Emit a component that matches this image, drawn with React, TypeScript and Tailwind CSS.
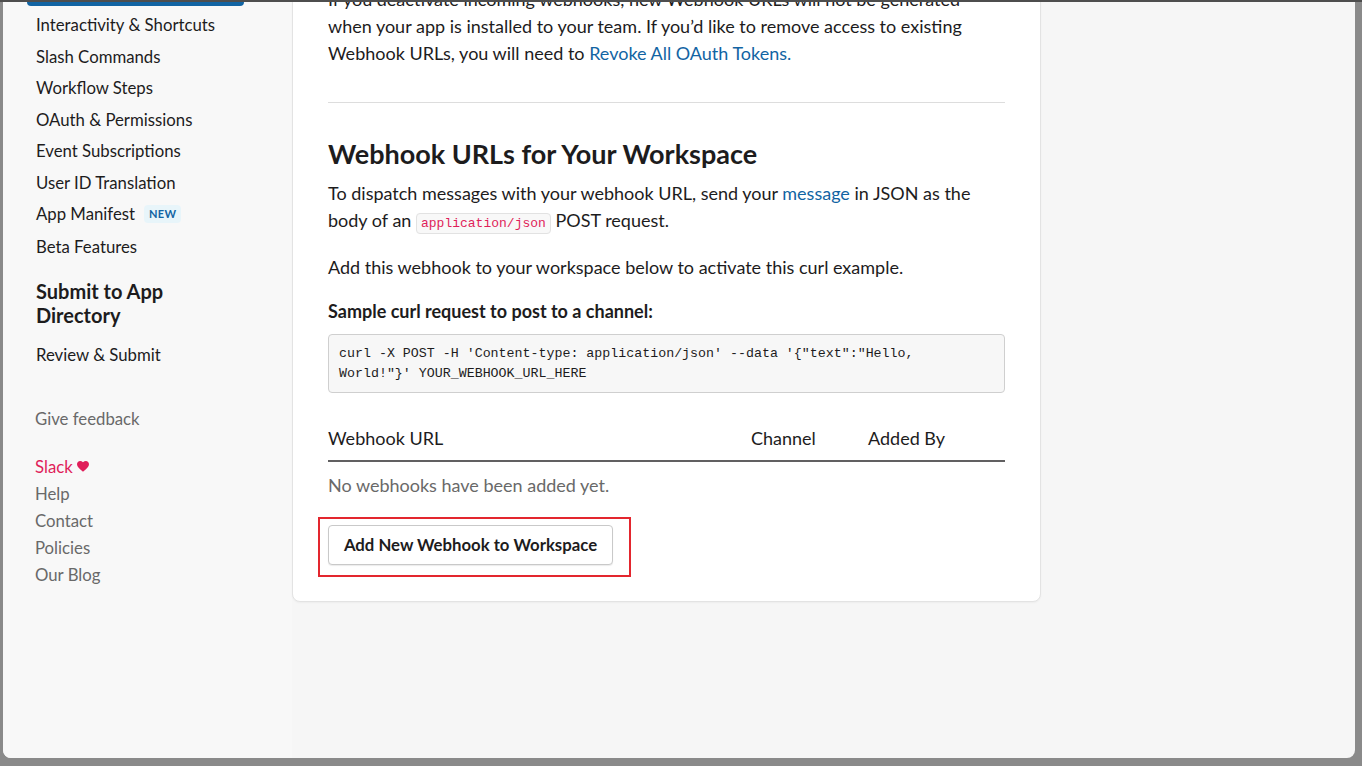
import React from 'react';

const navItems = [
    'Interactivity & Shortcuts',
    'Slash Commands',
    'Workflow Steps',
    'OAuth & Permissions',
    'Event Subscriptions',
    'User ID Translation',
];

const footerLinks = ['Help', 'Contact', 'Policies', 'Our Blog'];

const Sidebar = () => {
    return (
        <aside className="w-[289px] shrink-0 bg-[#f8f8f8] text-[#1d1c1d]">
            <div className="ml-[24px] w-[217px] h-[4px] rounded-b-md bg-[#1264a3]" />
            <div className="mt-[3px] pl-[33px] text-[16.75px]">
                {navItems.map((item) => (
                    <div key={item} className="h-[31.5px] flex items-center">
                        {item}
                    </div>
                ))}
                <div className="h-[32px] flex items-center gap-[9px]">
                    App Manifest
                    <span className="px-[5px] h-[18px] flex items-center rounded bg-[#e8f5fa] text-[#1264a3] text-[11px] font-bold tracking-wide">
                        NEW
                    </span>
                </div>
                <div className="h-[33px] flex items-center">Beta Features</div>
                <h3 className="mt-[16px] text-[20px] leading-[24px] font-bold w-[150px]">
                    Submit to App Directory
                </h3>
                <div className="mt-[12px] h-[31.5px] flex items-center">Review &amp; Submit</div>
                <div className="mt-[36px] -ml-[1px] leading-[24px] text-[#696969]">Give feedback</div>
                <div className="mt-[22.5px] -ml-[1px] leading-[27px] text-[#696969]">
                    <div className="flex items-center gap-[4px] text-[#e01e5a]">
                        Slack
                        <svg width="12" height="11" viewBox="0 0 24 22" fill="#e01e5a">
                            <path d="M12 21.5 10.3 20C4.2 14.5 0 10.8 0 6.3 0 2.7 2.8 0 6.3 0c2 0 4 .9 5.7 2.4C13.7.9 15.7 0 17.7 0 21.2 0 24 2.7 24 6.3c0 4.5-4.2 8.2-10.3 13.7L12 21.5z" />
                        </svg>
                    </div>
                    {footerLinks.map((link) => (
                        <div key={link}>{link}</div>
                    ))}
                </div>
            </div>
        </aside>
    );
};

const WebhookCard = () => {
    return (
        <section className="-mt-[17px] w-[749px] bg-white border border-[#e3e3e3] rounded-b-lg shadow-[0_1px_2px_rgba(0,0,0,0.04)] px-[35px] pb-[24px] text-[#1d1c1d] text-[18px]">
            <p className="leading-[27px] whitespace-nowrap">
                If you deactivate incoming webhooks, new Webhook URLs will not be generated
                <br />
                when your app is installed to your team. If you’d like to remove access to existing
                <br />
                Webhook URLs, you will need to <a className="text-[#1264a3]">Revoke All OAuth Tokens.</a>
            </p>
            <hr className="mt-[35px] border-0 h-px bg-[#dddddd]" />
            <h2 className="mt-[35px] text-[27px] leading-[32px] font-bold">Webhook URLs for Your Workspace</h2>
            <p className="mt-[9.5px] leading-[27px] whitespace-nowrap">
                To dispatch messages with your webhook URL, send your <a className="text-[#1264a3]">message</a> in
                JSON as the
                <br />
                body of an{' '}
                <code className="px-[4px] py-[2px] leading-none rounded border border-[#e2e2e2] bg-[#f8f8f8] text-[#e01e5a] text-[13px] font-['Liberation_Mono',monospace]">
                    application/json
                </code>{' '}
                POST request.
            </p>
            <p className="mt-[20px] leading-[27px]">Add this webhook to your workspace below to activate this curl example.</p>
            <p className="mt-[17px] leading-[27px] font-bold">Sample curl request to post to a channel:</p>
            <pre className="mt-[9.5px] px-[10px] pt-[8.5px] pb-[8.5px] border border-[#cfcfcf] rounded bg-[#f7f7f7] text-[13.3px] leading-[20px] text-[#1d1c1d] font-['Liberation_Mono',monospace] whitespace-pre-wrap">
                {`curl -X POST -H 'Content-type: application/json' --data '{"text":"Hello,\nWorld!"}' YOUR_WEBHOOK_URL_HERE`}
            </pre>
            <div className="mt-[33px] grid grid-cols-[423px_117px_1fr] pb-[10px] border-b-2 border-[#616061] leading-[24px]">
                <div>Webhook URL</div>
                <div>Channel</div>
                <div>Added By</div>
            </div>
            <p className="mt-[11px] leading-[24px] text-[#696969]">No webhooks have been added yet.</p>
            <div className="mt-[20px] -ml-[10px] inline-block border-2 border-[#e3262e] pl-[8px] pr-[16px] pt-[6px] pb-[10px]">
                <button className="h-[40px] w-[285px] rounded border border-[#c9c9c9] bg-white text-[16.75px] font-bold text-[#1d1c1d] shadow-[0_1px_1px_rgba(0,0,0,0.08)]">
                    Add New Webhook to Workspace
                </button>
            </div>
        </section>
    );
};

export default function App() {
    return (
        <div className="w-[1362px] h-[766px] bg-[#8a8a8a] border-t-2 border-[#4e4e4e] pl-[3px] pr-[7px] pb-[8px] font-['Lato',sans-serif] overflow-hidden">
            <div className="h-full flex bg-[#f6f6f6] rounded-b-lg overflow-hidden">
                <Sidebar />
                <main className="flex-1">
                    <WebhookCard />
                </main>
            </div>
        </div>
    );
}
